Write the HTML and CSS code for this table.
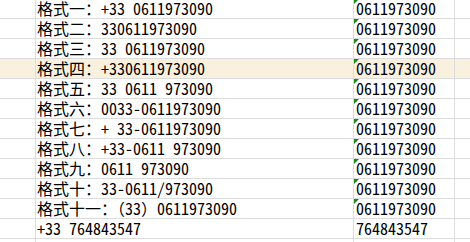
FILE: index.html
```html
<!DOCTYPE html>
<html lang="zh">
<head>
<meta charset="utf-8">
<link rel="stylesheet" href="styles.css">
</head>
<body>
<div class="sheet">
  <div class="row"><div class="c a"></div><div class="c b">格式一：<span class="n">+33 0611973090</span></div><div class="c t n">0611973090<i class="flag"></i></div><div class="c d"></div></div>
  <div class="row"><div class="c a"></div><div class="c b">格式二：<span class="n">330611973090</span></div><div class="c t n">0611973090<i class="flag"></i></div><div class="c d"></div></div>
  <div class="row"><div class="c a"></div><div class="c b">格式三：<span class="n">33 0611973090</span></div><div class="c t n">0611973090<i class="flag"></i></div><div class="c d"></div></div>
  <div class="row sel"><div class="c a"></div><div class="c b">格式四：<span class="n">+330611973090</span></div><div class="c t n">0611973090<i class="flag"></i></div><div class="c d"></div></div>
  <div class="row"><div class="c a"></div><div class="c b">格式五：<span class="n">33 0611 973090</span></div><div class="c t n">0611973090<i class="flag"></i></div><div class="c d"></div></div>
  <div class="row"><div class="c a"></div><div class="c b">格式六：<span class="n">0033-0611973090</span></div><div class="c t n">0611973090<i class="flag"></i></div><div class="c d"></div></div>
  <div class="row"><div class="c a"></div><div class="c b">格式七：<span class="n">+ 33-0611973090</span></div><div class="c t n">0611973090<i class="flag"></i></div><div class="c d"></div></div>
  <div class="row"><div class="c a"></div><div class="c b">格式八：<span class="n">+33-0611 973090</span></div><div class="c t n">0611973090<i class="flag"></i></div><div class="c d"></div></div>
  <div class="row"><div class="c a"></div><div class="c b">格式九：<span class="n">0611 973090</span></div><div class="c t n">0611973090<i class="flag"></i></div><div class="c d"></div></div>
  <div class="row"><div class="c a"></div><div class="c b">格式十：<span class="n">33-0611/973090</span></div><div class="c t n">0611973090<i class="flag"></i></div><div class="c d"></div></div>
  <div class="row"><div class="c a"></div><div class="c b">格式十一：（<span class="n">33</span>）<span class="n">0611973090</span></div><div class="c t n">0611973090<i class="flag"></i></div><div class="c d"></div></div>
  <div class="row"><div class="c a"></div><div class="c b n">+33 764843547</div><div class="c t n">764843547</div><div class="c d"></div></div>
  <div class="row"><div class="c a"></div><div class="c b"></div><div class="c t"></div><div class="c d"></div></div>
</div>
</body>
</html>
```
FILE: styles.css
```css
html, body {
  margin: 0;
  padding: 0;
  background: #ffffff;
  overflow: hidden;
}
.sheet {
  margin-top: -1px;
  font-family: "Noto Sans CJK SC", sans-serif;
  font-size: 16px;
  color: #000000;
}
.n {
  font-feature-settings: "hwid" 1;
}
.row {
  display: grid;
  grid-template-columns: 36px 318px 101px 1fr;
  height: 20px;
}
.row.sel {
  background: #faf0de;
}
.c {
  position: relative;
  height: 19px;
  line-height: 19px;
  border-bottom: 1px solid #dcdcdc;
  border-right: 1px solid #dcdcdc;
  white-space: nowrap;
}
.b {
  padding-left: 1px;
}
.t {
  padding-left: 2px;
}
.d {
  border-right: none;
}
.flag {
  position: absolute;
  left: 0;
  top: 0;
  width: 0;
  height: 0;
  border-top: 5px solid #1b8a1b;
  border-right: 5px solid transparent;
}
```
